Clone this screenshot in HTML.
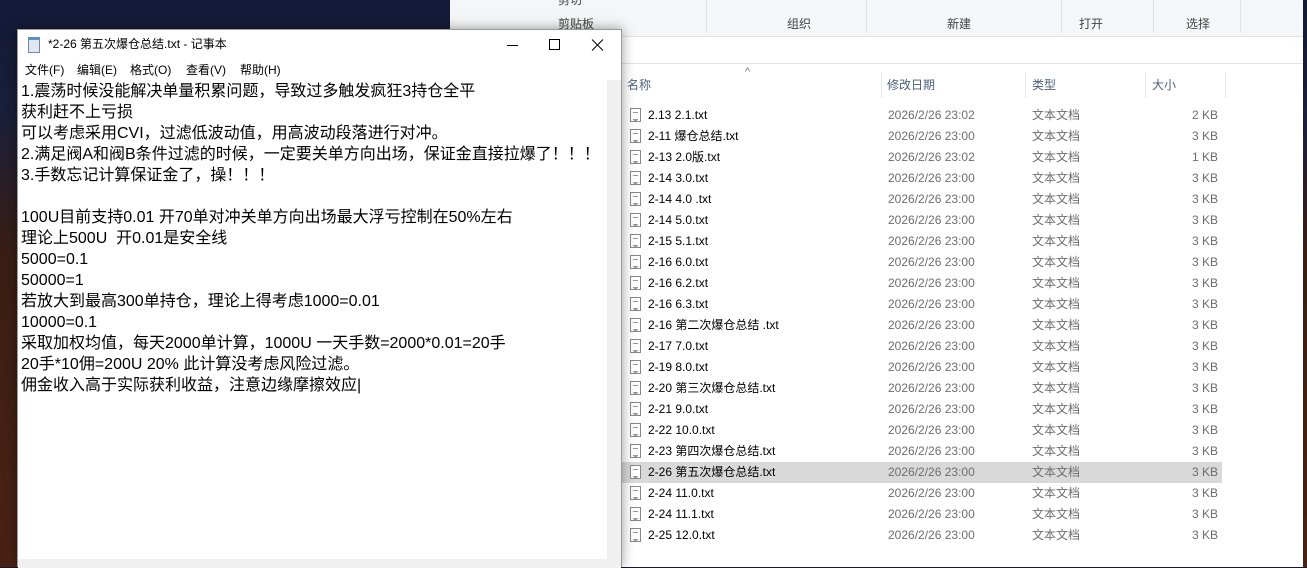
<!DOCTYPE html>
<html><head><meta charset="utf-8">
<style>
*{margin:0;padding:0;box-sizing:border-box}
body{width:1307px;height:567px;overflow:hidden;position:relative;font-family:"Liberation Sans","Noto Sans CJK SC",sans-serif;background:linear-gradient(180deg,#141a35 0%,#1a1f3a 20%,#3a1e14 45%,#4a2214 100%)}
.bg2{position:absolute;left:0;top:0;width:460px;height:40px;background:#141b38}
#exp{position:absolute;left:450px;top:0;width:853px;height:567px;background:#fff}
.rib{position:absolute;left:0;top:0;width:853px;height:37px;background:#f5f6f7;border-bottom:1px solid #e2e2e2}
.rib span{position:absolute;top:17px;font-size:12px;line-height:15px;color:#444}
.sep{position:absolute;top:0;width:1px;height:33px;background:#e2e2e2}
.addr{position:absolute;left:0;top:42px;width:853px;height:22px;border-bottom:1px solid #e5e5e5}
.hdr{position:absolute;top:78px;font-size:12px;line-height:15px;color:#4c607a}
.hsep{position:absolute;top:72px;width:1px;height:26px;background:#e5e5e5}
.row{position:absolute;left:172px;width:600px;height:21px;font-size:12px;color:#000}
.row span{line-height:15px}
.row.sel{background:#d9d9d9}
.row i{position:absolute;left:8px;top:3px;width:11px;height:14px;border:1px solid #888;background:#fff}
.row i:after{content:"";position:absolute;left:2px;top:3px;width:5px;height:6px;border-top:1px solid #999;border-bottom:1px solid #999;box-shadow:0 2px 0 -1px #999}
.row .n{position:absolute;left:26px;top:3px}
.row .d{position:absolute;left:266px;top:3px;color:#6d6d6d}
.row .t{position:absolute;left:410px;top:3px;color:#6d6d6d}
.row .s{position:absolute;right:4px;top:3px;color:#6d6d6d}
#np{position:absolute;left:17px;top:29px;width:605px;height:538px;background:#fff;border:1px solid #9a9a9a;box-shadow:0 0 12px rgba(0,0,0,.4)}
.title{position:absolute;left:0;top:0;width:603px;height:29px;font-size:12px;color:#000}
.title .tx{position:absolute;left:30px;top:7px;line-height:15px}
.menu{position:absolute;left:0;top:29px;width:603px;height:21px;font-size:12px}
.menu span{position:absolute;top:4px;line-height:15px}
.text{position:absolute;left:3px;top:51px;font-size:16px;line-height:21px;color:#000;white-space:pre}
.vs{position:absolute;left:589px;top:50px;width:14px;height:479px;background:#f0f0f0}
.hs{position:absolute;left:0;top:529px;width:603px;height:9px;background:#f0f0f0}
</style></head><body>
<div class="bg2"></div>
<div id="exp">
<div class="rib">
<span style="left:108px;top:-7px">剪切</span>
<span style="left:108px">剪贴板</span>
<span style="left:337px">组织</span>
<span style="left:497px">新建</span>
<span style="left:629px">打开</span>
<span style="left:736px">选择</span>
<div class="sep" style="left:256px"></div><div class="sep" style="left:416px"></div><div class="sep" style="left:611px"></div><div class="sep" style="left:703px"></div><div class="sep" style="left:790px"></div>
</div>
<div class="addr"></div>
<span style="position:absolute;left:295px;top:66px;font-size:11px;color:#777">^</span>
<span class="hdr" style="left:177px">名称</span>
<span class="hdr" style="left:437px">修改日期</span>
<span class="hdr" style="left:582px">类型</span>
<span class="hdr" style="left:702px">大小</span>
<div class="hsep" style="left:431px"></div><div class="hsep" style="left:575px"></div><div class="hsep" style="left:695px"></div><div class="hsep" style="left:775px"></div>
<div style="position:absolute;left:0;top:105px">
<div class="row" style="top:0"><i></i><span class="n">2.13 2.1.txt</span><span class="d">2026/2/26 23:02</span><span class="t">文本文档</span><span class="s">2 KB</span></div>
<div class="row" style="top:21px"><i></i><span class="n">2-11 爆仓总结.txt</span><span class="d">2026/2/26 23:00</span><span class="t">文本文档</span><span class="s">3 KB</span></div>
<div class="row" style="top:42px"><i></i><span class="n">2-13 2.0版.txt</span><span class="d">2026/2/26 23:02</span><span class="t">文本文档</span><span class="s">1 KB</span></div>
<div class="row" style="top:63px"><i></i><span class="n">2-14 3.0.txt</span><span class="d">2026/2/26 23:00</span><span class="t">文本文档</span><span class="s">3 KB</span></div>
<div class="row" style="top:84px"><i></i><span class="n">2-14 4.0 .txt</span><span class="d">2026/2/26 23:00</span><span class="t">文本文档</span><span class="s">3 KB</span></div>
<div class="row" style="top:105px"><i></i><span class="n">2-14 5.0.txt</span><span class="d">2026/2/26 23:00</span><span class="t">文本文档</span><span class="s">3 KB</span></div>
<div class="row" style="top:126px"><i></i><span class="n">2-15 5.1.txt</span><span class="d">2026/2/26 23:00</span><span class="t">文本文档</span><span class="s">3 KB</span></div>
<div class="row" style="top:147px"><i></i><span class="n">2-16 6.0.txt</span><span class="d">2026/2/26 23:00</span><span class="t">文本文档</span><span class="s">3 KB</span></div>
<div class="row" style="top:168px"><i></i><span class="n">2-16 6.2.txt</span><span class="d">2026/2/26 23:00</span><span class="t">文本文档</span><span class="s">3 KB</span></div>
<div class="row" style="top:189px"><i></i><span class="n">2-16 6.3.txt</span><span class="d">2026/2/26 23:00</span><span class="t">文本文档</span><span class="s">3 KB</span></div>
<div class="row" style="top:210px"><i></i><span class="n">2-16 第二次爆仓总结 .txt</span><span class="d">2026/2/26 23:00</span><span class="t">文本文档</span><span class="s">3 KB</span></div>
<div class="row" style="top:231px"><i></i><span class="n">2-17 7.0.txt</span><span class="d">2026/2/26 23:00</span><span class="t">文本文档</span><span class="s">3 KB</span></div>
<div class="row" style="top:252px"><i></i><span class="n">2-19 8.0.txt</span><span class="d">2026/2/26 23:00</span><span class="t">文本文档</span><span class="s">3 KB</span></div>
<div class="row" style="top:273px"><i></i><span class="n">2-20 第三次爆仓总结.txt</span><span class="d">2026/2/26 23:00</span><span class="t">文本文档</span><span class="s">3 KB</span></div>
<div class="row" style="top:294px"><i></i><span class="n">2-21 9.0.txt</span><span class="d">2026/2/26 23:00</span><span class="t">文本文档</span><span class="s">3 KB</span></div>
<div class="row" style="top:315px"><i></i><span class="n">2-22 10.0.txt</span><span class="d">2026/2/26 23:00</span><span class="t">文本文档</span><span class="s">3 KB</span></div>
<div class="row" style="top:336px"><i></i><span class="n">2-23 第四次爆仓总结.txt</span><span class="d">2026/2/26 23:00</span><span class="t">文本文档</span><span class="s">3 KB</span></div>
<div class="row sel" style="top:357px"><i></i><span class="n">2-26 第五次爆仓总结.txt</span><span class="d">2026/2/26 23:00</span><span class="t">文本文档</span><span class="s">3 KB</span></div>
<div class="row" style="top:378px"><i></i><span class="n">2-24 11.0.txt</span><span class="d">2026/2/26 23:00</span><span class="t">文本文档</span><span class="s">3 KB</span></div>
<div class="row" style="top:399px"><i></i><span class="n">2-24 11.1.txt</span><span class="d">2026/2/26 23:00</span><span class="t">文本文档</span><span class="s">3 KB</span></div>
<div class="row" style="top:420px"><i></i><span class="n">2-25 12.0.txt</span><span class="d">2026/2/26 23:00</span><span class="t">文本文档</span><span class="s">3 KB</span></div>
</div>
</div>
<div id="np">
<div class="title">
<svg style="position:absolute;left:9px;top:7px" width="14" height="16"><rect x="1.5" y="2.5" width="11" height="13" fill="#dfe8f0" stroke="#6d8aa5"/><rect x="1" y="0" width="12" height="3" fill="#5b8fc7"/></svg>
<span class="tx">*2-26 第五次爆仓总结.txt - 记事本</span>
<svg style="position:absolute;left:480px;top:8px" width="110" height="14"><line x1="9" y1="7.5" x2="20" y2="7.5" stroke="#000"/><rect x="51.5" y="1.5" width="10" height="10" fill="none" stroke="#000"/><path d="M94 1.5L105 12.5M105 1.5L94 12.5" stroke="#000"/></svg>
</div>
<div class="menu"><span style="left:7px">文件(F)</span><span style="left:59px">编辑(E)</span><span style="left:112px">格式(O)</span><span style="left:168px">查看(V)</span><span style="left:222px">帮助(H)</span></div>
<div class="text">1.震荡时候没能解决单量积累问题，导致过多触发疯狂3持仓全平
获利赶不上亏损
可以考虑采用CVI，过滤低波动值，用高波动段落进行对冲。
2.满足阀A和阀B条件过滤的时候，一定要关单方向出场，保证金直接拉爆了！！！
3.手数忘记计算保证金了，操！！！

100U目前支持0.01 开70单对冲关单方向出场最大浮亏控制在50%左右
理论上500U  开0.01是安全线
5000=0.1
50000=1
若放大到最高300单持仓，理论上得考虑1000=0.01
10000=0.1
采取加权均值，每天2000单计算，1000U 一天手数=2000*0.01=20手
20手*10佣=200U 20% 此计算没考虑风险过滤。
佣金收入高于实际获利收益，注意边缘摩擦效应|</div>
<div class="vs"></div>
<div class="hs"></div>
</div>
</body></html>
